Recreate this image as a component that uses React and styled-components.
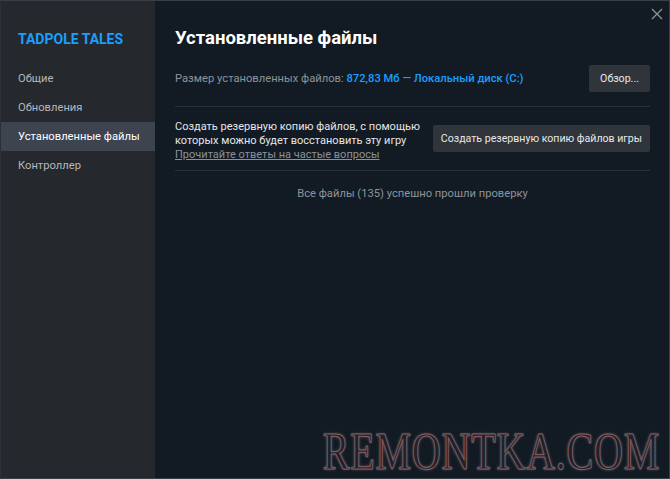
import React from "react";
import styled, { createGlobalStyle } from "styled-components";

const Global = createGlobalStyle`
  html, body { margin: 0; padding: 0; background: #121b23; }
  body { font-family: Roboto, "Liberation Sans", Arial, sans-serif; }
  * { box-sizing: border-box; }
`;

const Window = styled.div`
  position: relative;
  width: 670px;
  height: 479px;
  display: flex;
  border: 1px solid #3a3f46;
  border-left-color: #2c2f35;
  overflow: hidden;
`;

const Sidebar = styled.nav`
  width: 154px;
  flex: none;
  background: #25282d;
  display: flex;
  flex-direction: column;
  padding-top: 29px;
`;

const GameTitle = styled.div`
  padding-left: 17px;
  font-size: 14px;
  line-height: 18px;
  font-weight: bold;
  color: #1a9fff;
  margin-bottom: 16px;
`;

const NavItem = styled.div`
  height: 29px;
  display: flex;
  align-items: center;
  padding-left: 17px;
  font-size: 11.2px;
  white-space: nowrap;
  color: ${(p) => (p.$active ? "#ffffff" : "#b4b8bd")};
  background: ${(p) => (p.$active ? "#3d4450" : "transparent")};
`;

const Main = styled.main`
  flex: 1;
  min-width: 0;
  background: #121b23;
  padding: 0 19px 0 20px;
  display: flex;
  flex-direction: column;
`;

const Title = styled.h1`
  margin: 25px 0 0;
  font-size: 18.5px;
  line-height: 24px;
  font-weight: bold;
  color: #ffffff;
`;

const Row = styled.div`
  display: flex;
  justify-content: space-between;
  align-items: ${(p) => p.$align || "center"};
  padding: ${(p) => p.$pad};
  border-bottom: 1px solid #28313a;
`;

const Label = styled.div`
  font-size: 11.2px;
  color: #8d949b;
  white-space: nowrap;
`;

const Accent = styled.span`
  color: #1a9fff;
  font-weight: 500;
`;

const Button = styled.button`
  height: 27px;
  padding: 0 ${(p) => p.$px || 11}px;
  border: none;
  border-radius: 2px;
  background: #30343b;
  color: #e6e8ea;
  font-family: inherit;
  font-size: 10.6px;
  white-space: nowrap;
  margin-top: ${(p) => p.$mt || 0}px;
`;

const Desc = styled.div`
  font-size: 11px;
  line-height: 14px;
  color: #e4e6e8;
  white-space: nowrap;
`;

const Link = styled.a`
  display: block;
  color: #8b9198;
  text-decoration: underline;
  font-size: 11px;
  line-height: 14px;
  white-space: nowrap;
`;

const Status = styled.div`
  margin-top: 15px;
  text-align: center;
  font-size: 11.2px;
  line-height: 16px;
  color: #8d949b;
`;

const Close = styled.div`
  position: absolute;
  top: 7px;
  right: 6px;
  width: 12px;
  height: 12px;
  display: flex;
`;

const Watermark = styled.div`
  position: absolute;
  right: 9px;
  bottom: 0px;
  font-family: "Liberation Serif", "Times New Roman", serif;
  font-size: 52px;
  line-height: 52px;
  color: #1c2229;
  -webkit-text-stroke: 1px #8a5a60;
  text-shadow: 0 0 2px #6d7278, 0 0 4px #50555b;
  transform: scaleX(0.77);
  transform-origin: right bottom;
  white-space: nowrap;
  letter-spacing: 1px;
`;

export default function App() {
  return (
    <>
      <Global />
      <Window>
        <Sidebar>
          <GameTitle>TADPOLE TALES</GameTitle>
          <NavItem>Общие</NavItem>
          <NavItem>Обновления</NavItem>
          <NavItem $active>Установленные файлы</NavItem>
          <NavItem>Контроллер</NavItem>
        </Sidebar>
        <Main>
          <Title>Установленные файлы</Title>
          <Row $pad="15px 0 14px">
            <Label>
              Размер установленных файлов: <Accent>872,83 Мб — Локальный диск (C:)</Accent>
            </Label>
            <Button>Обзор...</Button>
          </Row>
          <Row $align="flex-start" $pad="13px 0 8px">
            <div>
              <Desc>
                Создать резервную копию файлов, с помощью
                <br />
                которых можно будет восстановить эту игру
              </Desc>
              <Link>Прочитайте ответы на частые вопросы</Link>
            </div>
            <Button $mt={5} $px={8}>Создать резервную копию файлов игры</Button>
          </Row>
          <Status>Все файлы (135) успешно прошли проверку</Status>
        </Main>
        <Close>
          <svg width="12" height="12" viewBox="0 0 12 12">
            <path d="M1 1 L11 11 M11 1 L1 11" stroke="#8b9096" strokeWidth="1.4" />
          </svg>
        </Close>
        <Watermark>REMONTKA.COM</Watermark>
      </Window>
    </>
  );
}
